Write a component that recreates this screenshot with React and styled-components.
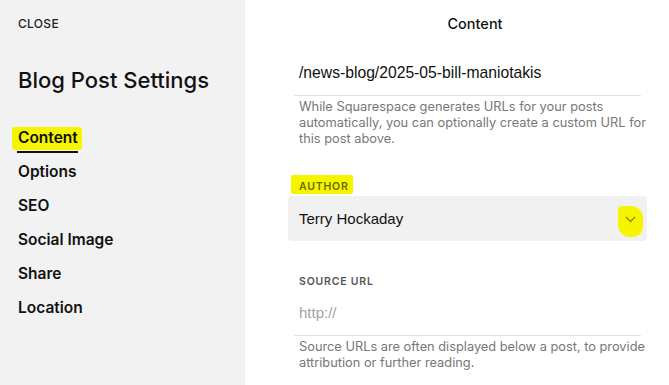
import React from "react";
import styled, { createGlobalStyle } from "styled-components";

const GlobalStyle = createGlobalStyle`
  html, body { margin: 0; padding: 0; background: #fff; }
  body { font-family: Inter, "Noto Sans", sans-serif; color: #111; }
`;

const Layout = styled.div`
  display: flex;
  width: 669px;
  height: 385px;
  overflow: hidden;
`;

const Sidebar = styled.aside`
  width: 245px;
  flex-shrink: 0;
  background: #f2f2f2;
  padding: 17px 0 0 18px;
  box-sizing: border-box;
`;

const Close = styled.div`
  font-size: 12px;
  font-weight: 500;
  letter-spacing: 0.3px;
  color: #222;
  line-height: 14px;
`;

const Heading = styled.h1`
  margin: 36px 0 0;
  font-size: 22px;
  font-weight: 500;
  line-height: 26px;
  color: #111;
`;

const Nav = styled.nav`
  display: flex;
  flex-direction: column;
  gap: 14px;
  margin-top: 35px;
`;

const NavItem = styled.div`
  position: relative;
  align-self: flex-start;
  font-size: 15.5px;
  font-weight: 600;
  line-height: 20px;
  color: #111;
  ${(p) =>
    p.$active &&
    `
    &::before {
      content: "";
      position: absolute;
      left: -6px; right: -4px; top: -1px; bottom: -2px;
      background: #f5f500;
      border-radius: 3px;
      z-index: 0;
    }
    &::after {
      content: "";
      position: absolute;
      left: -1px; right: 0; bottom: -5px;
      height: 2px;
      background: #111;
    }
  `}
`;

const NavLabel = styled.span`
  position: relative;
  z-index: 1;
`;

const Panel = styled.main`
  flex: 1;
  min-width: 0;
  background: #fff;
  display: flex;
  flex-direction: column;
`;

const PanelTitle = styled.div`
  text-align: center;
  font-size: 14.5px;
  font-weight: 500;
  line-height: 20px;
  padding: 14px 0 0 36px;
  color: #111;
`;

const Fields = styled.div`
  margin: 0 28px 0 49px;
  display: flex;
  flex-direction: column;
`;

const TextField = styled.div`
  border-bottom: 1px solid #e3e3e3;
  padding: 0 5px 13px;
  height: ${(p) => p.$h}px;
  box-sizing: border-box;
  display: flex;
  align-items: flex-end;
  font-family: "Liberation Sans", Arial, sans-serif;
  font-size: ${(p) => (p.$placeholder ? 15 : 15.7)}px;
  line-height: 18px;
  color: ${(p) => (p.$placeholder ? "#a3a3a3" : "#111")};
`;

const Help = styled.p`
  margin: 0;
  padding: 3px 0 0 5px;
  font-size: 12.8px;
  line-height: 16px;
  color: #777;
  white-space: nowrap;
`;

const Label = styled.div`
  align-self: flex-start;
  margin: ${(p) => p.$m};
  padding: 0 5px;
  font-size: 10.5px;
  font-weight: 600;
  letter-spacing: 0.8px;
  line-height: 14px;
  color: ${(p) => (p.$mark ? "#6b6b00" : "#555")};
  background: ${(p) => (p.$mark ? "#f5f500" : "transparent")};
  ${(p) => p.$mark && "margin-left: -3px; padding: 5px 4px 0 8px; border-radius: 2px;"}
`;

const Select = styled.div`
  margin: 0 -6px;
  height: 45px;
  background: #f1f1f1;
  border-radius: 4px;
  display: flex;
  justify-content: space-between;
  padding: 0 4px 0 11px;
  font-family: "Liberation Sans", Arial, sans-serif;
  font-size: 15px;
  line-height: 45px;
  color: #111;
`;

const Marker = styled.span`
  width: 25px;
  height: 31px;
  margin-top: 10px;
  background: #f5f500;
  border-radius: 4px 12px 10px 12px;
  display: flex;
  align-items: flex-start;
  justify-content: center;
  padding-top: 10px;
  box-sizing: border-box;
`;

const navItems = ["Content", "Options", "SEO", "Social Image", "Share", "Location"];

export default function App() {
  return (
    <>
      <GlobalStyle />
      <Layout>
        <Sidebar>
          <Close>CLOSE</Close>
          <Heading>Blog Post Settings</Heading>
          <Nav>
            {navItems.map((n, i) => (
              <NavItem key={n} $active={i === 0}>
                <NavLabel>{n}</NavLabel>
              </NavItem>
            ))}
          </Nav>
        </Sidebar>
        <Panel>
          <PanelTitle>Content</PanelTitle>
          <Fields>
            <TextField $h={62}>/news-blog/2025-05-bill-maniotakis</TextField>
            <Help>
              While Squarespace generates URLs for your posts
              <br />
              automatically, you can optionally create a custom URL for
              <br />
              this post above.
            </Help>
            <Label $mark $m="28px 0 2px 0">AUTHOR</Label>
            <Select>
              Terry Hockaday
              <Marker>
                <svg width="11" height="7" viewBox="0 0 11 7">
                  <path d="M1 1 L5.5 5.5 L10 1" fill="none" stroke="#8a8a10" strokeWidth="1.4" />
                </svg>
              </Marker>
            </Select>
            <Label $m="34px 0 0 0">SOURCE URL</Label>
            <TextField $h={47} $placeholder>
              http://
            </TextField>
            <Help>
              Source URLs are often displayed below a post, to provide
              <br />
              attribution or further reading.
            </Help>
          </Fields>
        </Panel>
      </Layout>
    </>
  );
}
